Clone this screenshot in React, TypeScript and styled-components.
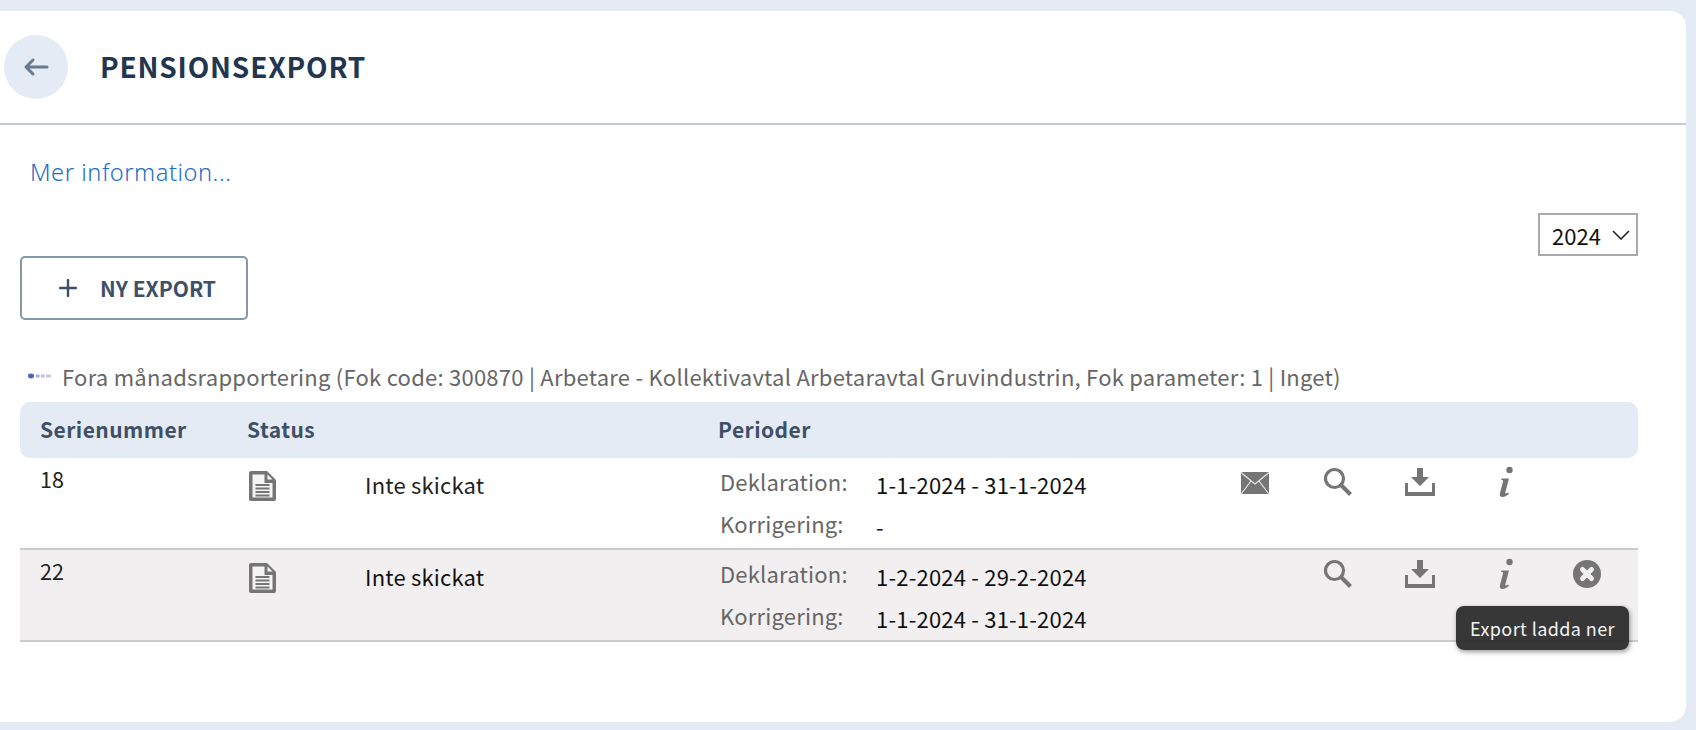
import React from "react";
import styled, { createGlobalStyle } from "styled-components";

const Global = createGlobalStyle`
  html, body { margin: 0; padding: 0; background: #e4ebf4; }
  body { font-family: "Noto Sans CJK SC", "Noto Sans", sans-serif; width: 1696px; height: 730px; overflow: hidden; }
`;

const Page = styled.div`
  padding: 11px 10px 8px 0;
  height: 730px;
  box-sizing: border-box;
`;
const Card = styled.main`
  background: #fff;
  height: 711px;
  border-radius: 0 16px 16px 0;
`;
const Header = styled.header`
  display: flex;
  align-items: center;
  gap: 32px;
  height: 112px;
  padding: 0 0 0 4px;
  border-bottom: 2px solid #c0ccd8;
`;
const BackButton = styled.button`
  width: 64px;
  height: 64px;
  border: 0;
  padding: 0;
  border-radius: 50%;
  background: #e4ebf4;
  color: #667a92;
  display: flex;
  align-items: center;
  justify-content: center;
`;
const Title = styled.h1`
  margin: 0 0 2px;
  font-size: 28px;
  line-height: 36px;
  font-weight: 700;
  letter-spacing: 0.82px;
  color: #22364f;
`;
const Body = styled.div`
  padding: 0 48px 0 20px;
`;
const MoreLink = styled.a`
  display: block;
  margin: 31px 0 0 10px;
  height: 32px;
  font-family: "Noto Sans", sans-serif;
  font-size: 23.6px;
  line-height: 32px;
  font-weight: 300;
  letter-spacing: 0.55px;
  color: #1f6cc4;
`;
const YearRow = styled.div`
  display: flex;
  justify-content: flex-end;
  margin-top: 25px;
  height: 43px;
`;
const YearSelect = styled.div`
  box-sizing: border-box;
  width: 100px;
  height: 43px;
  border: 2px solid #aaa;
  display: flex;
  align-items: center;
  gap: 11px;
  padding-left: 12px;
  font-size: 22px;
  line-height: 28px;
  color: #111;
`;
const AddButton = styled.button`
  display: flex;
  align-items: center;
  gap: 23px;
  box-sizing: border-box;
  width: 228px;
  height: 64px;
  margin-top: 0;
  padding: 0 0 0 37px;
  background: #fff;
  border: 2px solid #8598aa;
  border-radius: 5px;
  font-family: inherit;
  font-size: 21px;
  line-height: 28px;
  font-weight: 700;
  color: #3e5068;
`;
const ExportLine = styled.div`
  display: flex;
  align-items: center;
  height: 30px;
  margin-top: 41px;
  padding-left: 6px;
  gap: 10px;
  font-size: 22px;
  line-height: 30px;
  letter-spacing: 0.245px;
  color: #666;
  white-space: nowrap;
`;
const Table = styled.div`
  margin-top: 11px;
  width: 1618px;
`;
const gridColumns = "227px 119px 352px 495px repeat(5, 83px) 10px";
const HeadRow = styled.div`
  display: grid;
  grid-template-columns: ${gridColumns};
  height: 56px;
  box-sizing: border-box;
  padding-bottom: 3px;
  align-items: center;
  background: #e4ebf4;
  border-radius: 10px;
  font-size: 21px;
  line-height: 28px;
  font-weight: 700;
  color: #3e5068;
  letter-spacing: 0.45px;
`;
const SerialHead = styled.div`
  padding-left: 20px;
`;
const Row = styled.div<{ $shaded?: boolean }>`
  position: relative;
  display: grid;
  grid-template-columns: ${gridColumns};
  height: 92px;
  box-sizing: border-box;
  border-bottom: 2px solid #cccaca;
  background: ${(p) => (p.$shaded ? "#f1eff0" : "#fff")};
`;
const Serial = styled.div`
  padding: 7px 0 0 20px;
  font-size: 21.5px;
  line-height: 28px;
  color: #222;
`;
const DocCell = styled.div`
  padding-top: 12px;
  padding-left: 1px;
`;
const StatusText = styled.div<{ $shaded?: boolean }>`
  padding-top: 11px;
  margin-left: -1px;
  font-size: 22px;
  line-height: 30px;
  letter-spacing: 0.2px;
  color: ${(p) => (p.$shaded ? "#111" : "#222")};
`;
const Periods = styled.div`
  display: grid;
  grid-template-columns: 158px 1fr;
  grid-auto-rows: 41.500px;
  padding-top: 5px;
  font-size: 22px;
  line-height: 30px;
  letter-spacing: 0.2px;
`;
const PeriodLabel = styled.div`
  color: #666;
  padding-left: 2px;
  padding-top: 3px;
`;
const PeriodValue = styled.div`
  color: #111;
  padding-top: 6px;
`;
const IconCell = styled.div`
  display: flex;
  justify-content: center;
  padding-top: 9px;
  color: #757575;
`;
const Tooltip = styled.div`
  position: absolute;
  left: 1436px;
  top: 56px;
  box-sizing: border-box;
  width: 173px;
  height: 44px;
  display: flex;
  align-items: center;
  justify-content: center;
  border-radius: 8px;
  background: rgba(44, 44, 44, 0.95);
  box-shadow: 1px 2px 5px rgba(0, 0, 0, 0.4);
  color: #f2f2f2;
  font-size: 18px;
  line-height: 24px;
  letter-spacing: 0.4px;
  white-space: nowrap;
  z-index: 2;
`;

const soft = { filter: "blur(0.45px)" };

const BackArrow = () => (
  <svg width="26" height="20" viewBox="0 0 26 20" fill="none" stroke="currentColor" strokeWidth="3" strokeLinecap="round" strokeLinejoin="round">
    <path d="M24 10H3M10 3 3 10l7 7" />
  </svg>
);
const Plus = () => (
  <svg width="18" height="18" viewBox="0 0 18 18" stroke="#3e5068" strokeWidth="2.400" strokeLinecap="round">
    <path d="M9 1v16M1 9h16" />
  </svg>
);
const Chevron = () => (
  <svg width="18" height="10" viewBox="0 0 18 10" fill="none" stroke="#222" strokeWidth="1.600">
    <path d="M1 1l8 8 8-8" />
  </svg>
);
const TinyLogo = () => (
  <svg width="26" height="8" viewBox="0 0 26 8" style={{ filter: "blur(0.7px)" }}>
    <ellipse cx="5" cy="4" rx="3" ry="2.400" fill="#5060c0" />
    <rect x="10" y="2.500" width="3.500" height="3" fill="#a3aedc" />
    <rect x="15" y="2.500" width="3.500" height="3" fill="#b8bfe0" />
    <rect x="20" y="2.500" width="5" height="3" fill="#c3c8e0" />
  </svg>
);
const DocIcon = () => (
  <svg width="29" height="32" viewBox="0 0 29 32" style={{ display: "block", ...soft }}>
    <path d="M3 1h16l9 9v19a2 2 0 0 1-2 2H3a2 2 0 0 1-2-2V3a2 2 0 0 1 2-2z" fill="#757575" />
    <path d="M4.500 4.500h12v8.500h8v14.500H4.500z" fill="#f4f4f4" />
    <path d="M19.500 4.500l5 5h-5z" fill="#f4f4f4" />
    <path d="M7.500 15h14M7.500 18.500h14M7.500 22h14M7.500 25.500h14" stroke="#757575" strokeWidth="1.800" />
  </svg>
);
const MailIcon = () => (
  <svg width="30" height="24" viewBox="0 0 30 24" style={{ marginTop: 4, ...soft }}>
    <rect x="1" y="1" width="28" height="22" rx="1.500" fill="#757575" />
    <path d="M1.500 2 15 13 28.500 2M1.500 22.500 11 10M28.500 22.500 19 10" fill="none" stroke="#e8e8e8" strokeWidth="1.200" />
  </svg>
);
const SearchIcon = () => (
  <svg width="30" height="30" viewBox="0 0 30 30" fill="none" stroke="currentColor" style={soft}>
    <circle cx="11.500" cy="11.500" r="9" strokeWidth="3.200" />
    <path d="M18 18l9.500 9.500" strokeWidth="4" />
  </svg>
);
const DownloadIcon = () => (
  <svg width="32" height="30" viewBox="0 0 32 30" fill="currentColor" style={{ marginRight: 2, ...soft }}>
    <path d="M13 1h6v9h6l-9 9-9-9h6z" />
    <path d="M1 16h3v9h24v-9h3v13H1z" />
  </svg>
);
const InfoIcon = () => (
  <svg width="16" height="32" viewBox="0 0 16 32" fill="currentColor" style={{ marginLeft: 4, marginTop: -1, ...soft }}>
    <circle cx="11.500" cy="4" r="3.200" />
    <path d="M3.500 12.500h7.500l-3.700 14c-.3 1.300.7 1.500 2.900 0l.8 1.200C8.500 30 6.300 31 4.500 31 2.300 31 1.400 29.500 1.900 27.500L5 15.500c.2-.9-.2-1.400-1.900-1.400z" />
  </svg>
);
const CloseIcon = () => (
  <svg width="28" height="28" viewBox="0 0 28 28" style={{ marginTop: 1, ...soft }}>
    <circle cx="14" cy="14" r="14" fill="currentColor" />
    <path d="M9.500 9.500l9 9M18.500 9.500l-9 9" stroke="#f1eff0" strokeWidth="5" strokeLinecap="round" />
  </svg>
);

type ExportRow = {
  serial: string;
  declaration: string;
  correction: string;
  mail?: boolean;
  cancel?: boolean;
  shaded?: boolean;
};

const rows: ExportRow[] = [
  { serial: "18", declaration: "1-1-2024 - 31-1-2024", correction: "-", mail: true },
  { serial: "22", declaration: "1-2-2024 - 29-2-2024", correction: "1-1-2024 - 31-1-2024", cancel: true, shaded: true },
];

export default function App() {
  return (
    <Page>
      <Global />
      <Card>
        <Header>
          <BackButton aria-label="Tillbaka"><BackArrow /></BackButton>
          <Title>PENSIONSEXPORT</Title>
        </Header>
        <Body>
          <MoreLink>Mer information...</MoreLink>
          <YearRow>
            <YearSelect>2024 <Chevron /></YearSelect>
          </YearRow>
          <AddButton><Plus /> NY EXPORT</AddButton>
          <ExportLine>
            <TinyLogo />
            Fora månadsrapportering (Fok code: 300870 | Arbetare - Kollektivavtal Arbetaravtal Gruvindustrin, Fok parameter: 1 | Inget)
          </ExportLine>
          <Table>
            <HeadRow>
              <SerialHead>Serienummer</SerialHead>
              <div>Status</div>
              <div />
              <div>Perioder</div>
            </HeadRow>
            {rows.map((r) => (
              <Row key={r.serial} $shaded={r.shaded}>
                <Serial>{r.serial}</Serial>
                <DocCell><DocIcon /></DocCell>
                <StatusText $shaded={r.shaded}>Inte skickat</StatusText>
                <Periods>
                  <PeriodLabel>Deklaration:</PeriodLabel>
                  <PeriodValue>{r.declaration}</PeriodValue>
                  <PeriodLabel>Korrigering:</PeriodLabel>
                  <PeriodValue>{r.correction}</PeriodValue>
                </Periods>
                <IconCell>{r.mail && <MailIcon />}</IconCell>
                <IconCell><SearchIcon /></IconCell>
                <IconCell><DownloadIcon /></IconCell>
                <IconCell><InfoIcon /></IconCell>
                <IconCell>{r.cancel && <CloseIcon />}</IconCell>
                {r.shaded && <Tooltip>Export ladda ner</Tooltip>}
              </Row>
            ))}
          </Table>
        </Body>
      </Card>
    </Page>
  );
}
